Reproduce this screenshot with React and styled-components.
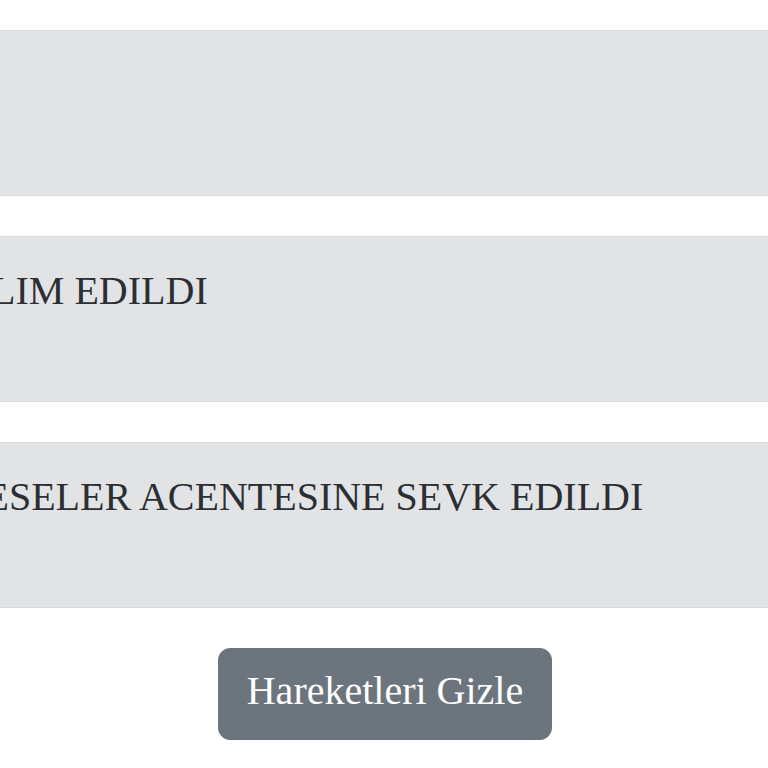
import React from "react";
import styled, { createGlobalStyle } from "styled-components";

const Global = createGlobalStyle`
  html, body {
    margin: 0;
    padding: 0;
    background: #ffffff;
    overflow: hidden;
  }
  body {
    font-family: "Liberation Serif", "Times New Roman", serif;
  }
`;

const Page = styled.div`
  width: 1032px;
  margin-left: -131px;
  padding-top: 30px;
  display: flex;
  flex-direction: column;
  align-items: stretch;
  gap: 40px;
`;

const Alert = styled.div`
  box-sizing: border-box;
  height: 166px;
  padding: 30px 50px;
  background: #e2e3e5;
  border: 1px solid #d9dadd;
  color: #2b2f33;
  font-size: 40px;
  line-height: normal;
  white-space: nowrap;
`;

const Actions = styled.div`
  display: flex;
  justify-content: center;
`;

const Button = styled.button`
  font-family: "Liberation Serif", "Times New Roman", serif;
  font-size: 40px;
  line-height: 60px;
  color: #ffffff;
  background: #6c757d;
  border: 1px solid #6c757d;
  border-radius: 12px;
  padding: 12px 28px 18px;
  cursor: pointer;
`;

const moves = ["", "TESLIM EDILDI", "MÜESELER ACENTESINE SEVK EDILDI"];

export default function App() {
  return (
    <>
      <Global />
      <Page>
        {moves.map((m, i) => (
          <Alert key={i}>{m || "\u00a0"}</Alert>
        ))}
        <Actions>
          <Button>Hareketleri Gizle</Button>
        </Actions>
      </Page>
    </>
  );
}
